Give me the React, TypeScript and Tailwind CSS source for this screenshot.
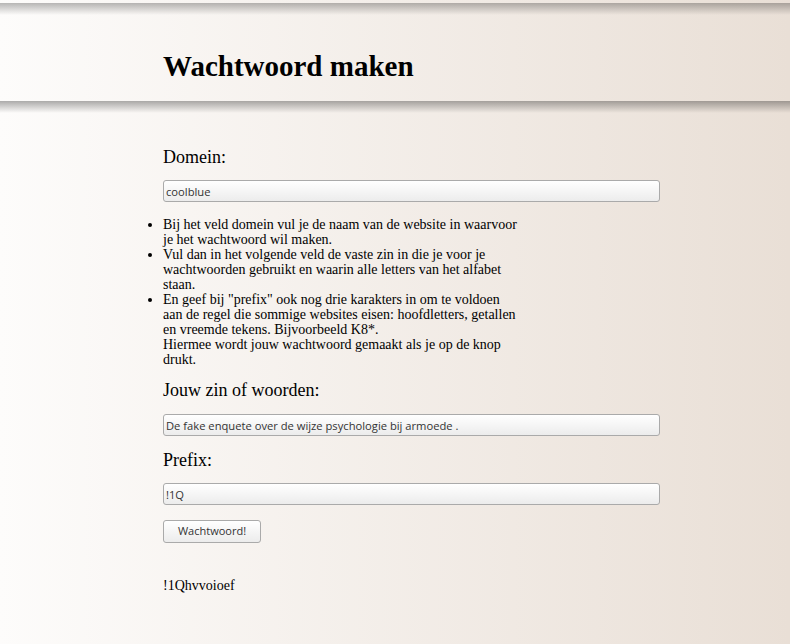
import React from "react";

export default function App() {
  const serif = { fontFamily: '"Liberation Serif", "Times New Roman", serif' };
  const inputCls =
    "block w-[497px] h-[22px] border border-[#aaaaaa] rounded-[3px] bg-gradient-to-b from-[#ffffff] to-[#ececec] px-[2px] text-[11.2px] text-[#333] outline-none";
  const sans = { fontFamily: '"Open Sans", "Noto Sans", sans-serif' };
  return (
    <div className="min-h-[644px] bg-gradient-to-r from-[#fdfcfb] to-[#e9dfd6] text-black" style={serif}>
      <div className="h-[3px]" />
      <div className="relative h-[98px]">
        <div className="absolute left-0 right-0 top-0 h-[12px] bg-gradient-to-b from-[rgba(0,0,0,0.28)] to-transparent" />
        <div className="pl-[163px] pt-[45px]">
          <h1 className="text-[29px] font-bold leading-[36px]">Wachtwoord maken</h1>
        </div>
        <div className="absolute left-0 right-0 bottom-[-12px] h-[12px] bg-gradient-to-b from-[rgba(0,0,0,0.32)] to-transparent" />
      </div>
      <div className="pl-[163px] pt-[45px]">
        <div className="text-[18px] leading-[22px]">Domein:</div>
        <input readOnly value="coolblue" className={inputCls + " mt-[12px]"} style={sans} />
        <ul className="list-disc ml-[0px] pl-0 mt-[15px] w-[357px] text-[14px] leading-[15px]">
          <li>Bij het veld domein vul je de naam van de website in waarvoor je het wachtwoord wil maken.</li>
          <li>Vul dan in het volgende veld de vaste zin in die je voor je wachtwoorden gebruikt en waarin alle letters van het alfabet staan.</li>
          <li>
            En geef bij "prefix" ook nog drie karakters in om te voldoen aan de regel die sommige websites eisen: hoofdletters, getallen en vreemde tekens. Bijvoorbeeld K8*.
            <br />
            Hiermee wordt jouw wachtwoord gemaakt als je op de knop drukt.
          </li>
        </ul>
        <div className="text-[18px] leading-[22px] mt-[12px]">Jouw zin of woorden:</div>
        <input readOnly value="De fake enquete over de wijze psychologie bij armoede ." className={inputCls + " mt-[13px]"} style={sans} />
        <div className="text-[18px] leading-[22px] mt-[13px]">Prefix:</div>
        <input readOnly value="!1Q" className={inputCls + " mt-[12px]"} style={sans} />
        <button
          className="block mt-[15px] w-[98px] h-[23px] border border-[#aaaaaa] rounded-[3px] bg-gradient-to-b from-[#ffffff] to-[#ececec] text-[11px] text-[#333]"
          style={sans}
        >
          Wachtwoord!
        </button>
        <div className="mt-[34px] text-[14px] leading-[18px]">!1Qhvvoioef</div>
      </div>
    </div>
  );
}
